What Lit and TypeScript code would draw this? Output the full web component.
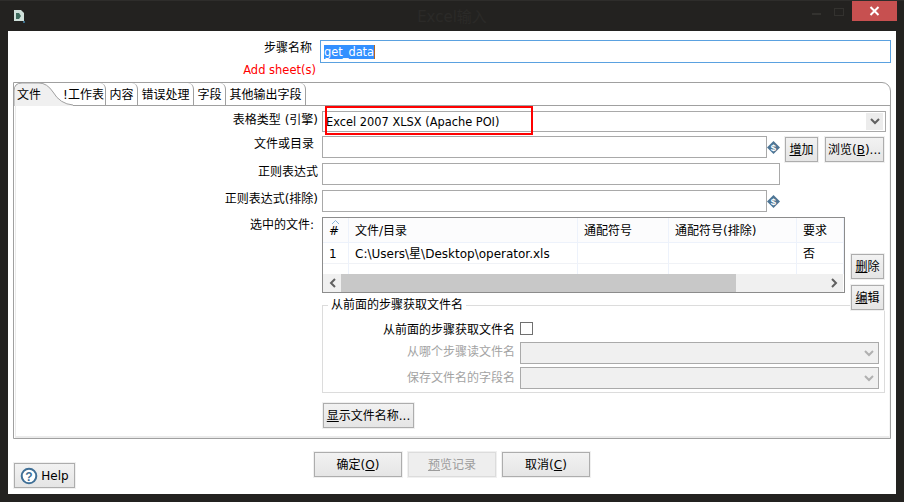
import { LitElement, html, css, svg } from "lit";
import { customElement } from "lit/decorators.js";

const dollar = html`<svg class="var" width="13" height="13" viewBox="0 0 13 13"><polygon points="6.5,0 13,6.5 6.5,13 0,6.5" fill="#4d7595"/><text x="6.5" y="10" text-anchor="middle" font-size="9.5" font-family="Liberation Sans" font-weight="700" fill="#fff">$</text></svg>`;
const chevPath = svg`<path d="M1 1l4 4 4-4" fill="none" stroke="currentColor" stroke-width="2"/>`;
const chevron = html`<svg class="chev" width="10" height="7" viewBox="0 0 10 7">${chevPath}</svg>`;

@customElement("app-root")
export class AppRoot extends LitElement {
  static styles = css`
    :host { display: block; width: 904px; height: 502px; overflow: hidden; font: 12px/16px "DejaVu Sans", "Noto Sans CJK SC", sans-serif; color: #000; }
    * { box-sizing: border-box; }
    .window { position: relative; width: 904px; height: 502px; background: #232220; border-top: 1px solid #2e2d2b; display: flex; flex-direction: column; padding: 0 8px 8px; }
    .title { height: 30px; flex: none; display: flex; align-items: flex-start; position: relative; }
    .appicon { margin: 9px 0 0 6px; }
    .title-text { position: absolute; left: 0; right: 0; top: 6px; text-align: center; color: #2b2a28; font-size: 15px; line-height: 20px; }
    .ctl { position: absolute; top: 0; right: -1px; display: flex; align-items: flex-start; }
    .min { width: 9px; height: 2px; margin: 12px 13px 0 0; background: #33322f; }
    .max { width: 10px; height: 8px; margin: 7px 8px 0 0; border: 1px solid #33322f; }
    .close { width: 45px; height: 20px; background: #c75050; display: flex; align-items: center; justify-content: center; }
    .client { flex: 1; background: #fff; display: flex; flex-direction: column; padding: 9px 5px 0; }
    .name-row { display: flex; height: 23px; }
    .name-row .lbl { width: 299px; text-align: right; line-height: 17px; }
    .name-input { margin-left: 8px; flex: 1; border: 1px solid #5aa1e0; padding: 2px 3px; line-height: 18px; font-size: 11.400px; }
    .sel { background: #3390ff; color: #fff; box-shadow: 1px 0 0 #b5651d; }
    .red { width: 303px; text-align: right; color: #f00; height: 19px; line-height: 15px; font-size: 11.500px; }
    .panel { height: 357px; border: 1px solid #a0a0a0; border-radius: 0 9px 0 0; flex: none; display: flex; flex-direction: column; position: relative; }
    .tabs { height: 23px; flex: none; display: flex; border-bottom: 1px solid #a0a0a0; position: relative; padding-left: 48px; }
    .curve { position: absolute; left: -1px; top: -1px; }
    .tab { height: 23px; border-right: 1px solid #a0a0a0; border-radius: 0 6px 0 0; line-height: 25px; text-align: center; white-space: nowrap; flex: none; border-bottom: 1px solid #a0a0a0; }
    .tab.first { position: absolute; left: 0; top: 0; width: 30px; border: 0; background: none; z-index: 1; }
    .body { flex: 1; margin: 0 0 0 1px; border-left: 1px solid #ebebeb; border-bottom: 2px solid #ebebeb; border-right: 1px solid #f4f4f4; padding-top: 5px; display: flex; flex-direction: column; }
    .row { display: flex; align-items: flex-start; flex: none; }
    .l { width: 306px; flex: none; text-align: right; padding-right: 8px; line-height: 17px; white-space: nowrap; }
    .l.wide { padding-right: 4px; padding-top: 1px; }
    .input { height: 22px; border: 1px solid #a9a9a9; background: #fff; flex: none; }
    .combo { width: 564px; height: 21px; border: 1px solid #a9a9a9; padding: 0 0 0 3px; display: flex; align-items: center; justify-content: space-between; line-height: 18px; font-size: 11.400px; color: #000; }
    .arrow { width: 17px; height: 17px; margin-right: 2px; background: #ececec; display: flex; align-items: center; justify-content: center; color: #606060; }
    .var { margin: 5px 0 0 0; flex: none; }
    .btn { height: 25px; border: 1px solid #adadad; background: linear-gradient(#f2f2f2, #e5e5e5); box-shadow: 0 0 0 1px #f0f0f0; display: flex; align-items: center; justify-content: center; white-space: nowrap; flex: none; }
    u { text-underline-offset: 1px; }
    .table { width: 523px; height: 76px; border: 1px solid #8c8c8c; flex: none; display: flex; flex-direction: column; }
    .grid { display: grid; grid-template-columns: 26px 229px 91px 128px 47px; flex: none; }
    .grid > div { padding-left: 6px; border-right: 1px solid #edf2fb; white-space: nowrap; overflow: hidden; }
    .head > div { height: 25px; background: #fcfcfd; line-height: 27px; border-bottom: 1px solid #edf2fb; position: relative; }
    .r1 > div { height: 21px; line-height: 22px; border-bottom: 1px solid #f0f2f6; }
    .r2 > div { height: 10px; }
    .caret { position: absolute; left: 9px; top: 2px; }
    .scroll { height: 18px; background: #f0f0f0; display: flex; align-items: center; flex: none; margin-right: 1px; }
    .sb { width: 18px; height: 18px; display: flex; align-items: center; justify-content: center; flex: none; }
    .thumb { width: 395px; height: 18px; background: #c8c8c8; }
    .sp { flex: 1; }
    .side { position: relative; z-index: 1; display: flex; flex-direction: column; gap: 6px; margin: 37px 0 0 6px; }
    .side .btn { width: 33px; }
    .group { width: 563px; height: 96px; margin: 4px 0 0 306px; padding: 0; border: 1px solid #dcdcdc; flex: none; min-inline-size: auto; }
    legend { margin-left: 5px; padding: 0 3px; line-height: 16px; }
    .grow { display: flex; align-items: flex-start; }
    .gl { width: 192px; text-align: right; line-height: 16px; }
    .gl.off { color: #a3a3a3; }
    .check { width: 13px; height: 13px; border: 1px solid #707070; margin-left: 5px; background: #fff; }
    .dis { width: 359px; height: 22px; margin-left: 5px; border: 1px solid #aaa; background: #f0f0f0; display: flex; align-items: center; justify-content: flex-end; padding-right: 4px; color: #b0b0b0; }
    .footer { flex: 1; position: relative; display: flex; justify-content: center; gap: 6px; padding-top: 13px; }
    .footer .btn { width: 88px; }
    .btn.dim { color: #9c9c9c; border-color: #dcdcdc; background: #eee; }
    .footer .btn.help { position: absolute; left: 1px; top: 24px; width: 61px; gap: 3px; font-size: 12px; }
    .mark { position: absolute; left: 325px; top: 105px; width: 208px; height: 29px; border: 2px solid #f00; pointer-events: none; z-index: 2; }
  `;

  render() {
    return html`<div class="window">
      <div class="title">
        <svg class="appicon" width="11" height="13" viewBox="0 0 11 13"><path d="M0 0h7l3 3v8H0z" fill="#cfe0da"/><path d="M2 3h3l2 3-2 3H2z" fill="#3c6a5c"/><rect x="9" y="11" width="2" height="2" fill="#3a6d8a"/></svg>
        <div class="title-text">Excel输入</div>
        <div class="ctl"><div class="min"></div><div class="max"></div>
          <div class="close"><svg width="11" height="10" viewBox="0 0 11 10"><path d="M1.500 1l8 8M9.500 1l-8 8" stroke="#fff" stroke-width="2" fill="none"/></svg></div></div>
      </div>
      <div class="client">
        <div class="name-row"><div class="lbl">步骤名称</div><div class="name-input"><span class="sel">get_data</span></div></div>
        <div class="red">Add sheet(s)</div>
        <div class="panel">
          <div class="tabs">
            <svg class="curve" width="60" height="25" viewBox="0 0 60 25"><path d="M1 24V9Q1 1 9 1H26Q34 1 40 10Q47 22 60 23V24Z" fill="#f0f0f0"/><path d="M1 24V9Q1 1 9 1H26Q34 1 40 10Q47 22 60 23" fill="none" stroke="#a0a0a0"/></svg>
            <div class="tab first">文件</div>
            <div class="tab" style="width:44px">!工作表</div>
            <div class="tab" style="width:32px">内容</div>
            <div class="tab" style="width:56px">错误处理</div>
            <div class="tab" style="width:32px">字段</div>
            <div class="tab" style="width:80px">其他输出字段</div>
          </div>
          <div class="body">
            <div class="row"><div class="l wide">表格类型 (引擎)</div><div class="combo"><span>Excel 2007 XLSX (Apache POI)</span><span class="arrow">${chevron}</span></div></div>
            <div class="row" style="margin-top:4px"><div class="l">文件或目录</div><div class="input" style="width:445px"></div>${dollar}<div class="btn" style="width:33px;margin:1px 0 0 5px"><span><u>增</u>加</span></div><div class="btn" style="width:59px;margin:1px 0 0 7px"><span>浏览(<u>B</u>)...</span></div></div>
            <div class="row" style="margin-top:1px"><div class="l wide">正则表达式</div><div class="input" style="width:458px"></div></div>
            <div class="row" style="margin-top:5px"><div class="l wide">正则表达式(排除)</div><div class="input" style="width:445px"></div>${dollar}</div>
            <div class="row" style="margin-top:5px;height:76px">
              <div class="l">选中的文件:</div>
              <div class="table">
                <div class="grid head"><div>#<svg class="caret" width="7" height="4" viewBox="0 0 7 4"><path d="M0 4l3.500-3.500L7 4" fill="none" stroke="#8ab4d8"/></svg></div><div>文件/目录</div><div>通配符号</div><div>通配符号(排除)</div><div>要求</div></div>
                <div class="grid r1"><div>1</div><div>C:\\Users\\星\\Desktop\\operator.xls</div><div></div><div></div><div>否</div></div>
                <div class="grid r2"><div></div><div></div><div></div><div></div><div></div></div>
                <div class="scroll"><span class="sb"><svg width="7" height="10" viewBox="0 0 7 10"><path d="M6 1L2 5l4 4" fill="none" stroke="#606060" stroke-width="2"/></svg></span><div class="thumb"></div><div class="sp"></div><span class="sb"><svg width="7" height="10" viewBox="0 0 7 10"><path d="M1 1l4 4-4 4" fill="none" stroke="#606060" stroke-width="2"/></svg></span></div>
              </div>
              <div class="side"><div class="btn"><span><u>删</u>除</span></div><div class="btn"><span><u>编</u>辑</span></div></div>
            </div>
            <fieldset class="group">
              <legend>从前面的步骤获取文件名</legend>
              <div class="grow" style="margin-top:9px"><div class="gl">从前面的步骤获取文件名</div><div class="check"></div></div>
              <div class="grow" style="margin-top:4px"><div class="gl off" style="margin-top:2px">从哪个步骤读文件名</div><div class="dis">${chevron}</div></div>
              <div class="grow" style="margin-top:3px"><div class="gl off" style="margin-top:3px">保存文件名的字段名</div><div class="dis">${chevron}</div></div>
            </fieldset>
            <div class="btn" style="width:91px;margin:10px 0 0 307px"><span><u>显</u>示文件名称...</span></div>
          </div>
        </div>
        <div class="footer">
          <div class="btn help"><svg width="18" height="18" viewBox="0 0 18 18"><circle cx="9" cy="9" r="7.300" fill="#fff" stroke="#3f6f96" stroke-width="2"/><text x="9" y="13.500" text-anchor="middle" font-size="12" font-weight="700" font-family="Liberation Sans" fill="#3f6f96">?</text></svg><span>Help</span></div>
          <div class="btn"><span>确定(<u>O</u>)</span></div>
          <div class="btn dim"><span><u>预</u>览记录</span></div>
          <div class="btn"><span>取消(<u>C</u>)</span></div>
        </div>
      </div>
      <div class="mark"></div>
    </div>`;
  }
}
